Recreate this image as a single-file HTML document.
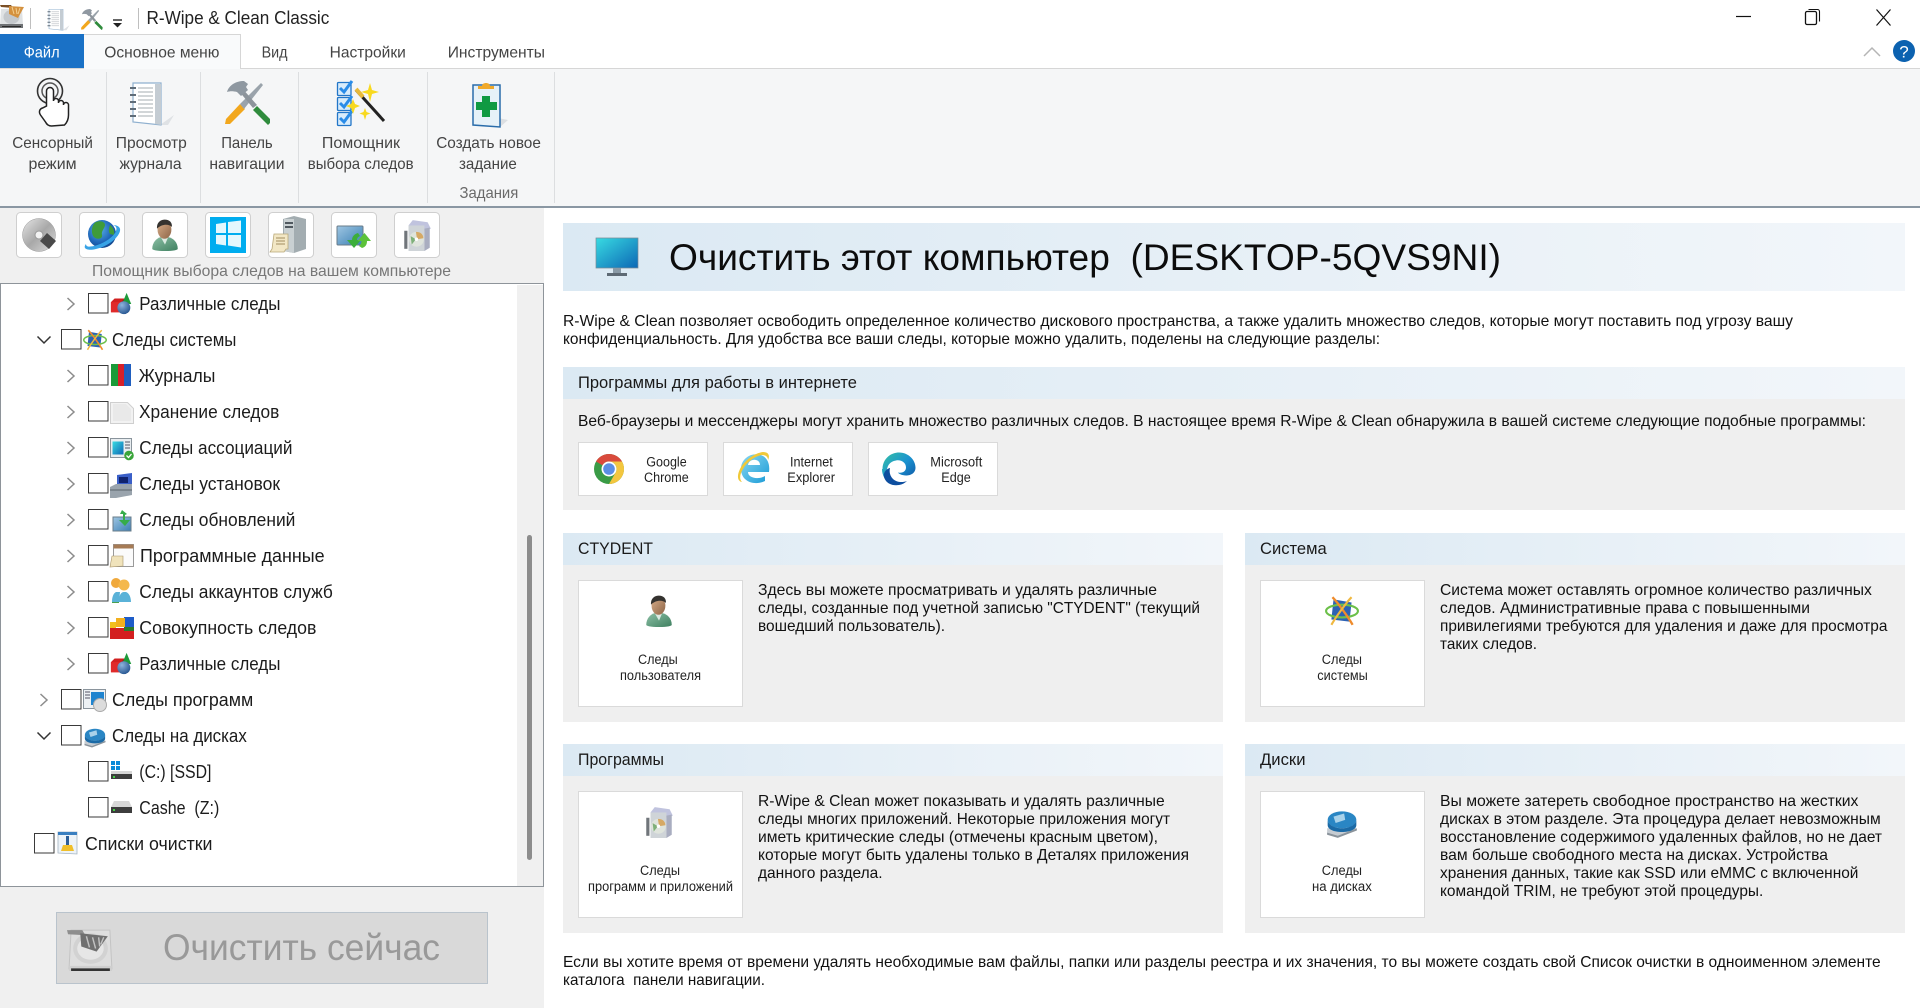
<!DOCTYPE html>
<html lang="ru"><head><meta charset="utf-8"><title>R-Wipe &amp; Clean Classic</title>
<style>
html,body{margin:0;padding:0;background:#fff;overflow:hidden}
svg{display:block}
text{font-family:"Liberation Sans",Arial,sans-serif;white-space:pre}
.r{font-size:16px;fill:#444}
.t{font-size:18.5px;fill:#1c1c1c}
.p{font-size:16px;fill:#111}
.h{font-size:16.5px;fill:#1a1a1a}
.l{font-size:13.5px;fill:#222}
</style></head><body>
<svg xmlns="http://www.w3.org/2000/svg" width="1920" height="1008" viewBox="0 0 1920 1008">
<defs>
<linearGradient id="hg" x1="0" x2="1" y1="0" y2="0"><stop offset="0" stop-color="#dbe9f3"/><stop offset="1" stop-color="#f2f6fa"/></linearGradient>
<linearGradient id="mon" x1="0" x2="1" y1="0" y2="1"><stop offset="0" stop-color="#38dbe2"/><stop offset="1" stop-color="#0c67b5"/></linearGradient>
<linearGradient id="skin" x1="0" x2="1" y1="0" y2="1"><stop offset="0" stop-color="#d8ae8a"/><stop offset="1" stop-color="#8e6547"/></linearGradient>
<linearGradient id="grn" x1="0" x2="1" y1="0" y2="1"><stop offset="0" stop-color="#8dc0a6"/><stop offset="1" stop-color="#3f8060"/></linearGradient>
<linearGradient id="disc" x1="0" x2="1" y1="0" y2="1"><stop offset="0" stop-color="#e6e6e6"/><stop offset=".5" stop-color="#a8a8a8"/><stop offset="1" stop-color="#dcdcdc"/></linearGradient>
<linearGradient id="scr" x1="0" x2="1" y1="0" y2="1"><stop offset="0" stop-color="#9fc6e2"/><stop offset="1" stop-color="#3a7fb4"/></linearGradient>
<radialGradient id="globe" cx=".4" cy=".35" r=".75"><stop offset="0" stop-color="#5ab0e8"/><stop offset=".6" stop-color="#1f66b8"/><stop offset="1" stop-color="#123f80"/></radialGradient>
<radialGradient id="blueb" cx=".35" cy=".3" r=".8"><stop offset="0" stop-color="#8db4dc"/><stop offset="1" stop-color="#1f4f8c"/></radialGradient>
<linearGradient id="edge" x1="0" x2="1" y1="0" y2="1"><stop offset="0" stop-color="#35c1a4"/><stop offset=".5" stop-color="#1b93d0"/><stop offset="1" stop-color="#0c4a9c"/></linearGradient>
<linearGradient id="ie" x1="0" x2="1" y1="0" y2="1"><stop offset="0" stop-color="#8ad8f2"/><stop offset="1" stop-color="#1a9ad6"/></linearGradient>

<symbol id="user" viewBox="0 0 32 32">
<path d="M4 29c0-6 4-10 8-11h7c5 1 9 5 9 11 0 1-4 2-12 2S4 30 4 29z" fill="url(#grn)"/>
<path d="M12 18l4 7 3-7z" fill="#dcebe3"/>
<ellipse cx="15.5" cy="11" rx="6.5" ry="8.5" fill="url(#skin)"/>
<path d="M8.5 10C8 4 12 1.500 16 1.500s7 2.500 6.500 7C20 5.500 13 5.500 8.500 10z" fill="#34322f"/>
</symbol>
<symbol id="atom" viewBox="0 0 32 32">
<path d="M8 5l17 3-2 18-17-2z" fill="#2d62b4"/>
<ellipse cx="16" cy="16" rx="15" ry="6" fill="none" stroke="#6cc04a" stroke-width="2"/>
<path d="M7 3C12 8 22 22 26 29" fill="none" stroke="#ef8b2b" stroke-width="2.200"/>
<path d="M25 3C20 8 10 22 6 29" fill="none" stroke="#f0b840" stroke-width="2"/>
</symbol>
<symbol id="box" viewBox="0 0 32 32">
<path d="M8 7l4-5 14 2 3 6-6 2z" fill="#c0c3de"/>
<path d="M8 7h15v24H8z" fill="#cfd4d8"/>
<path d="M23 10l5-1v19l-5 3z" fill="#a9adc0"/>
<path d="M4 12h3v17H4z" fill="#70757a"/>
<circle cx="15.5" cy="20" r="7" fill="#dfe4dc"/>
<path d="M15 13c5 0 7 3 7 6l-6 1z" fill="#d6a964"/>
<path d="M10 17l5 3-4 5z" fill="#7fb07a"/>
<circle cx="15.5" cy="20" r="1.600" fill="#fff"/>
</symbol>
<symbol id="disks" viewBox="0 0 32 32">
<path d="M2 21l20-3 8 3-18 8-10-3z" fill="#c6ccd2"/>
<path d="M2 25l10 3 18-7v2l-18 7-10-3z" fill="#8a939b"/>
<ellipse cx="16" cy="13" rx="13.500" ry="8" fill="#2a86c4"/>
<path d="M2.500 13v5c0 4 6 6.500 13.500 6.500S29.500 22 29.500 18v-5c0 4-6 8-13.500 8S2.500 17 2.500 13z" fill="#1b6aa6"/>
<path d="M8 10l10-3 1 6-9 3z" fill="#a9d2ea"/>
</symbol>
<symbol id="cube" viewBox="0 0 26 26">
<path d="M1 11l4-4h11v11l-4 4H1z" fill="#d11f1f"/><path d="M1 11h11v11H1z" fill="#e02a2a"/><path d="M12 11l4-4v11l-4 4z" fill="#8e1010"/>
<path d="M18 1l5 12h-10z" fill="#1e9a3a"/>
<circle cx="15" cy="17" r="7" fill="url(#blueb)"/>
</symbol>
<symbol id="diskico" viewBox="0 0 48 48">
<path d="M4 6h38l2 38H2z" fill="#dedede" stroke="#c4c4c4"/>
<ellipse cx="23" cy="24" rx="17" ry="15" fill="#d2d2d2"/>
<ellipse cx="23" cy="24" rx="13" ry="11" fill="#e6e6e6"/>
<path d="M2 41h42v5H2z" fill="#cfcfcf"/><path d="M4 43.500h38v2.500H4z" fill="#333"/>
<path d="M0 6l15 0 3 5L1 10z" fill="#8e8e8e"/>
<path d="M13 9l27 3-11 15-15-5z" fill="#707070"/>
<path d="M19 12l3 11M25 13l3 11M31 13l1 9M36 13l-3 7" stroke="#c2c2c2" stroke-width="1.400"/>
</symbol>
<symbol id="tools" viewBox="223 80 48 46">
<path d="M225 124l1-5 14-15 5 5-15 15z" fill="#f2a71d"/>
<path d="M240 104l21-21 2 2-19 24z" fill="#9aa3ab"/>
<path d="M268 125l-15-15 4-4 13 13 0 4z" fill="#2f8b3c"/>
<path d="M253 108L238 90l3-3 16 18z" fill="#8d949b"/>
<path d="M227 92c2-7 9-11 17-11l4 3-2 3 2 3-7 6-4-4c-4-1-7-1-10 0z" fill="#8f98a1"/>
</symbol>
<symbol id="journal" viewBox="129 81 46 45">
<path d="M160 125l14-10-6 10z" fill="#dfe2e5"/>
<path d="M133 83h28v42l-28-3z" fill="#fff" stroke="#8fb0cf" stroke-width="1.200"/>
<path d="M155 84h6v41l-6-1z" fill="#c4ccd3"/>
<path d="M138 88h15M138 92h15M138 96h15M138 100h15M138 104h15M138 108h15M138 112h15M138 116h15" stroke="#c3c8cc" stroke-width="1.500"/>
<path d="M130 88h6M130 95h6M130 102h6M130 109h6M130 116h6" stroke="#5f6c78" stroke-width="2"/>
</symbol>
</defs>

<!-- title bar -->
<rect width="1920" height="1008" fill="#fff"/>
<path d="M1 9h21l1 16H0z" fill="#dfe2e4"/>
<ellipse cx="11.500" cy="17" rx="8" ry="7" fill="#c4c8cc"/>
<path d="M0 24h23v4H0z" fill="#6f7275"/><path d="M2 26h19v1H2z" fill="#2b2b2b"/>
<path d="M0 5l11 0 2 3-12-1z" fill="#7a4f25"/>
<path d="M9 6l15 1-6 11-9-4z" fill="#d4913f"/>
<path d="M12 7l2 7M16 8l1 6M20 8l-2 6" stroke="#f3cf8f"/>
<rect x="30" y="8" width="1" height="21" fill="#bfbfbf"/>
<use href="#journal" x="47" y="8" width="23" height="23"/>
<use href="#tools" x="80" y="8" width="23" height="23"/>
<path d="M113 20h9" stroke="#333" stroke-width="1.500"/><path d="M113 23h9l-4.500 4.500z" fill="#222"/>
<rect x="138" y="8" width="1" height="21" fill="#bfbfbf"/>
<text x="146.500" y="24" font-size="18.500" fill="#222" textLength="182.800" lengthAdjust="spacingAndGlyphs">R-Wipe &amp; Clean Classic</text>
<path d="M1736 16.500h15" stroke="#111" stroke-width="1.200"/>
<rect x="1805.500" y="11.500" width="11" height="13" rx="1.500" fill="none" stroke="#111" stroke-width="1.300"/>
<path d="M1808.500 9.500h9a2 2 0 0 1 2 2v10" fill="none" stroke="#111" stroke-width="1.100"/>
<path d="M1876.500 9.500l14 16M1890.500 9.500l-14 16" stroke="#111" stroke-width="1.200"/>

<!-- ribbon -->
<rect x="0" y="68" width="1920" height="139" fill="#f5f6f7"/>
<rect x="0" y="68" width="1920" height="1" fill="#d6d6d6"/>
<rect x="0" y="206" width="1920" height="2" fill="#8a97a3"/>
<rect x="0" y="34" width="84" height="34" fill="#1a71c6"/>
<rect x="84" y="34" width="156" height="35" fill="#f9fafb"/>
<rect x="84" y="34" width="156" height="1" fill="#d6d6d6"/>
<rect x="240" y="34" width="1" height="35" fill="#d6d6d6"/>
<text x="23.700" y="57.500" font-size="16" fill="#fff" textLength="35.900" lengthAdjust="spacingAndGlyphs">Файл</text>
<text class="r" x="104.300" y="57.500" textLength="115.100" lengthAdjust="spacingAndGlyphs">Основное меню</text>
<text class="r" x="261.600" y="57.500" textLength="25.900" lengthAdjust="spacingAndGlyphs">Вид</text>
<text class="r" x="329.600" y="57.500" textLength="76.200" lengthAdjust="spacingAndGlyphs">Настройки</text>
<text class="r" x="447.700" y="57.500" textLength="97.300" lengthAdjust="spacingAndGlyphs">Инструменты</text>
<path d="M1864 56l8-8 8 8" fill="none" stroke="#b5b5b5" stroke-width="1.500"/>
<ellipse cx="1904" cy="51" rx="11" ry="11" fill="#0c62b0"/>
<text x="1904" y="57.500" font-size="17" fill="#fff" text-anchor="middle">?</text>

<g fill="#dcdee0"><rect x="106" y="72" width="1" height="131"/><rect x="200" y="72" width="1" height="131"/><rect x="298" y="72" width="1" height="131"/><rect x="427" y="72" width="1" height="131"/><rect x="554" y="72" width="1" height="131"/></g>

<!-- touch icon -->
<circle cx="50" cy="91" r="12.500" fill="none" stroke="#333" stroke-width="1.600"/>
<circle cx="50" cy="91" r="8" fill="none" stroke="#555" stroke-width="1.500"/>
<path d="M46.500 106V91a3.500 3.500 0 0 1 7 0v10a2.500 2.500 0 0 1 5 0v2a2.500 2.500 0 0 1 5 0v2a2.500 2.500 0 0 1 5 0v10c0 4-1 7-4 10l-13 1c-3 0-5-2-6-4l-5-7c-2-3-1-6 2-7z" fill="#fff" stroke="#222" stroke-width="1.500"/>
<use href="#journal" x="129" y="81" width="46" height="45"/>
<use href="#tools" x="223" y="80" width="48" height="46"/>
<!-- wizard -->
<g fill="#d8ecfb" stroke="#2276c8" stroke-width="1.300">
<rect x="337.500" y="82.500" width="13.500" height="13" rx="1"/><rect x="337.500" y="97.500" width="13.500" height="13" rx="1"/><rect x="337.500" y="112.500" width="13.500" height="13" rx="1"/></g>
<g fill="none" stroke="#2a8ce8" stroke-width="3"><path d="M340 88l4 4 8-11"/><path d="M340 103l4 4 8-11"/><path d="M340 118l4 4 8-11"/></g>
<path d="M356 90l28 31" stroke="#222" stroke-width="3"/><path d="M356 89l7 8" stroke="#e8b93a" stroke-width="4"/>
<g fill="#f8d91f"><path d="M370 83l2 7 7 2-7 2-2 8-2-8-7-2 7-2z"/><path d="M353 99l2 5 5 2-5 2-2 6-2-6-5-2 5-2z"/><path d="M365 108l1.500 4 4 1.500-4 1.500-1.500 5-1.500-5-4-1.500 4-1.500z"/></g>
<!-- clipboard -->
<path d="M500 127l8-7-10-2z" fill="#dcdfe2"/>
<path d="M473 85l27 0v42l-27-2z" fill="#e6f1f8" stroke="#2a6caa" stroke-width="1.500"/>
<path d="M478 89h16v-3h-4c0-4-8-4-8 0h-4z" fill="#f0a92a"/>
<path d="M482 96h8v6h7v8h-7v7h-8v-7h-6v-8h6z" fill="#109a42"/>

<text class="r" x="12.200" y="148" textLength="80.700" lengthAdjust="spacingAndGlyphs">Сенсорный</text>
<text class="r" x="28.500" y="169" textLength="48.100" lengthAdjust="spacingAndGlyphs">режим</text>
<text class="r" x="115.800" y="148" textLength="71" lengthAdjust="spacingAndGlyphs">Просмотр</text>
<text class="r" x="119.500" y="169" textLength="62.100" lengthAdjust="spacingAndGlyphs">журнала</text>
<text class="r" x="221.200" y="148" textLength="51.500" lengthAdjust="spacingAndGlyphs">Панель</text>
<text class="r" x="209.400" y="169" textLength="75.100" lengthAdjust="spacingAndGlyphs">навигации</text>
<text class="r" x="321.900" y="148" textLength="78.100" lengthAdjust="spacingAndGlyphs">Помощник</text>
<text class="r" x="307.800" y="169" textLength="105.800" lengthAdjust="spacingAndGlyphs">выбора следов</text>
<text class="r" x="436.200" y="148" textLength="104.700" lengthAdjust="spacingAndGlyphs">Создать новое</text>
<text class="r" x="459" y="169" textLength="57.800" lengthAdjust="spacingAndGlyphs">задание</text>
<text x="459.500" y="198" font-size="16" fill="#6a6a6a" textLength="58.800" lengthAdjust="spacingAndGlyphs">Задания</text>

<!-- left panel -->
<rect x="0" y="208" width="544" height="800" fill="#f0f0f0"/>
<g fill="#fff" stroke="#cfcfcf"><rect x="16.500" y="212.500" width="45" height="45" rx="4"/><rect x="79.500" y="212.500" width="45" height="45" rx="4"/><rect x="142.500" y="212.500" width="45" height="45" rx="4"/><rect x="205.500" y="212.500" width="45" height="45" rx="4"/><rect x="268.500" y="212.500" width="45" height="45" rx="4"/><rect x="331.500" y="212.500" width="45" height="45" rx="4"/><rect x="394.500" y="212.500" width="45" height="45" rx="4"/></g>
<!-- disc -->
<circle cx="39" cy="235" r="16.500" fill="url(#disc)" stroke="#999" stroke-width=".5"/>
<circle cx="39" cy="235" r="4" fill="#f2f2f2" stroke="#999"/>
<path d="M40 241l7-8 9 8-7 8z" fill="#4a4a4a"/>
<!-- globe -->
<circle cx="102" cy="234" r="14" fill="url(#globe)"/>
<path d="M96 222c5-2 9 0 9 3s-4 6-3 10-5 5-8 2-3-12 2-15zM110 225c3 2 5 6 4 10l-4-1c-2-3-1-6 0-9z" fill="#3f9b3a"/>
<path d="M86 244c-4 5 2 7 10 5 10-2 22-10 24-18 1-4-3-6-7-6 3 1 5 3 2 8-4 6-13 11-21 13-5 1-8 1-8-2z" fill="#38a3e6"/>
<use href="#user" x="148" y="218" width="34" height="34"/>
<!-- windows -->
<rect x="210" y="217" width="36" height="36" fill="#00adef"/>
<path d="M216 224l10-1.500V233h-10zM228 222l13-1.500V233h-13zM216 235h10v10.500l-10-1.500zM228 235h13v12.500l-13-2z" fill="#e4f7fd"/>
<!-- server -->
<path d="M283 219l11-3 12 3v30l-12 4-11-2z" fill="#a3adb1"/>
<path d="M284 219h10v34l-10-2z" fill="#c9d0d2"/><path d="M285 222h8v2h-8zM285 226h8v2h-8z" fill="#50595f"/>
<path d="M274 234h14v15h-2l-2 3h-14l2-3z" fill="#f2e7c5" stroke="#b9a878" stroke-width=".8"/>
<path d="M276 238h9M276 241h9M276 244h9" stroke="#a18d5e"/>
<!-- screen arrows -->
<rect x="337" y="226" width="26" height="19" rx="1" fill="url(#scr)" stroke="#6a7c8a"/>
<path d="M358 233c-4 1-6 4-6 7h-5l7 8 7-8h-4c0-2 1-3 3-4z" fill="#3cae3a"/>
<path d="M362 248c4-1 5-4 5-7h4l-6.500-8-7 8h4c0 2-1 4-2.500 5z" fill="#5cc23a"/>
<use href="#box" x="400" y="218" width="34" height="34"/>
<text x="92" y="276" font-size="16" fill="#777" textLength="359" lengthAdjust="spacingAndGlyphs">Помощник выбора следов на вашем компьютере</text>

<!-- tree -->
<rect x=".5" y="283.500" width="543" height="603" fill="#fff" stroke="#8e949a"/>
<rect x="517" y="285" width="26" height="601" fill="#f0f0f0"/>
<rect x="527" y="535" width="5" height="325" rx="2.500" fill="#8c8c8c"/>

<g fill="none">
<g stroke="#8c8c8c" stroke-width="1.500"><path d="M67.500 298l6.500 6-6.500 6M67.500 370l6.500 6-6.500 6M67.500 406l6.500 6-6.500 6M67.500 442l6.500 6-6.500 6M67.500 478l6.500 6-6.500 6M67.500 514l6.500 6-6.500 6M67.500 550l6.500 6-6.500 6M67.500 586l6.500 6-6.500 6M67.500 622l6.500 6-6.500 6M67.500 658l6.500 6-6.500 6M40.500 694l6.500 6-6.500 6"/></g>
<g stroke="#333" stroke-width="1.500"><path d="M37.500 336.500l6.500 6.500 6.500-6.500M37.500 732.500l6.500 6.500 6.500-6.500"/></g>
</g>
<g fill="#fff" stroke="#3a3a3a"><rect x="88.500" y="293.500" width="19.500" height="19.500"/><rect x="61.500" y="329.500" width="19.500" height="19.500"/><rect x="88.500" y="365.500" width="19.500" height="19.500"/><rect x="88.500" y="401.500" width="19.500" height="19.500"/><rect x="88.500" y="437.500" width="19.500" height="19.500"/><rect x="88.500" y="473.500" width="19.500" height="19.500"/><rect x="88.500" y="509.500" width="19.500" height="19.500"/><rect x="88.500" y="545.500" width="19.500" height="19.500"/><rect x="88.500" y="581.500" width="19.500" height="19.500"/><rect x="88.500" y="617.500" width="19.500" height="19.500"/><rect x="88.500" y="653.500" width="19.500" height="19.500"/><rect x="61.500" y="689.500" width="19.500" height="19.500"/><rect x="61.500" y="725.500" width="19.500" height="19.500"/><rect x="88.500" y="761.500" width="19.500" height="19.500"/><rect x="88.500" y="797.500" width="19.500" height="19.500"/><rect x="34.500" y="833.500" width="19.500" height="19.500"/></g>

<use href="#cube" x="110" y="292" width="24" height="24"/>
<use href="#atom" x="83" y="328" width="24" height="24"/>
<!-- books -->
<rect x="111" y="364" width="7" height="22" fill="#1a9a38"/><rect x="118" y="364" width="6" height="22" fill="#d6202a"/><rect x="124" y="364" width="7" height="22" fill="#1f5ebf"/>
<!-- storage -->
<path d="M110.500 402.500h17l6 6v15h-23z" fill="#f2f2f2" stroke="#cfcfcf"/><path d="M113 404h13l5 5v12h-18z" fill="#e9e9e9"/>
<!-- assoc -->
<rect x="110.500" y="438.500" width="21" height="19" fill="#e8edf0" stroke="#8a949c"/><rect x="112.500" y="441.500" width="11" height="13" fill="url(#mon)"/><path d="M125 442h5M125 445h5M125 448h5" stroke="#556"/>
<circle cx="129" cy="455.500" r="4.800" fill="#3aa53a"/><path d="M126.500 455.500l2 2 3-3.500" stroke="#fff" stroke-width="1.300" fill="none"/>
<!-- install -->
<path d="M117 475l15-2v13h-15z" fill="#3a5fc8"/><rect x="119" y="477" width="9" height="6" fill="#10236e"/><path d="M110 487l6-3h16v11l-16 3h-6z" fill="#9aa4ad"/><path d="M110 490h22" stroke="#59636c"/>
<!-- updates -->
<rect x="113" y="517" width="18" height="14" fill="url(#scr)" stroke="#6a7c8a"/><path d="M122 510l5 4-2 1v5l5 0-5 6-6-6h4v-6l-3 0z" fill="#35ac4a"/>
<!-- progdata -->
<rect x="113.500" y="544.500" width="20" height="22" fill="#fbfbfb" stroke="#9a9a9a"/><rect x="113.500" y="544.500" width="20" height="4" fill="#a67b55"/>
<path d="M112 556h11v10l-13 1z" fill="#f0e3bb" stroke="#a8946a" stroke-width=".6"/>
<!-- accounts -->
<circle cx="116" cy="583" r="5" fill="#f0a93c"/><circle cx="124" cy="585" r="5.500" fill="#f4b84c"/>
<path d="M112 602c0-6 2-9 4-10h4l-1 10zM119 602c0-7 2-10 5-10h2c3 1 5 5 5 10z" fill="#5ab2d8"/><path d="M112 602h7v1h-7z" fill="#49a04f"/>
<!-- aggregate -->
<rect x="124" y="617" width="10" height="10" fill="#1e5cc8"/><rect x="116" y="618" width="9" height="9" fill="#f2b01e"/><rect x="110" y="622" width="6" height="6" fill="#f2c01e"/><rect x="110" y="628" width="24" height="11" fill="#d31f1f"/><rect x="124" y="627" width="10" height="4" fill="#2b7a2b"/>
<use href="#cube" x="110" y="652" width="24" height="24"/>
<!-- programs -->
<rect x="83.500" y="689.500" width="22" height="19" fill="#edf1f4" stroke="#8a949c"/><path d="M85 692h5M85 695h5M85 698h5" stroke="#556"/><rect x="91" y="692" width="13" height="13" fill="#1f84cf"/><circle cx="100" cy="705" r="6.500" fill="#dcdcdc" stroke="#aaa"/>
<use href="#disks" x="83" y="725" width="24" height="24"/>
<!-- drives -->
<rect x="111" y="761" width="4" height="4" fill="#0a8ad8"/><rect x="116" y="761" width="4" height="4" fill="#0a8ad8"/><rect x="111" y="766" width="4" height="4" fill="#0a8ad8"/><rect x="116" y="766" width="4" height="4" fill="#0a8ad8"/>
<path d="M111 771h21v3h-21z" fill="#d7d7d7"/><rect x="111" y="774" width="21" height="5" fill="#3d3d3d"/><rect x="113" y="776" width="2" height="2" fill="#44d044"/>
<path d="M114 801h15l3 6h-21z" fill="#d7d7d7"/><rect x="111" y="807" width="21" height="6" fill="#3d3d3d"/><rect x="113" y="809" width="2" height="2" fill="#44d044"/>
<!-- list -->
<path d="M58 832h19v22l-19-1z" fill="#edf3f8" stroke="#a5b4c2" stroke-width=".8"/><rect x="58" y="832" width="19" height="3" fill="#3a7fc0"/><path d="M66 836h3v9h-3z" fill="#2c5e98"/><path d="M63 845h9l2 6H61z" fill="#f0bf2a"/>

<text class="t" x="139.300" y="310" textLength="141.100" lengthAdjust="spacingAndGlyphs">Различные следы</text>
<text class="t" x="112" y="346" textLength="124.400" lengthAdjust="spacingAndGlyphs">Следы системы</text>
<text class="t" x="138.600" y="382" textLength="76.800" lengthAdjust="spacingAndGlyphs">Журналы</text>
<text class="t" x="139" y="418" textLength="140.300" lengthAdjust="spacingAndGlyphs">Хранение следов</text>
<text class="t" x="139.300" y="454" textLength="153.200" lengthAdjust="spacingAndGlyphs">Следы ассоциаций</text>
<text class="t" x="139.300" y="490" textLength="140.700" lengthAdjust="spacingAndGlyphs">Следы установок</text>
<text class="t" x="139.300" y="526" textLength="156.100" lengthAdjust="spacingAndGlyphs">Следы обновлений</text>
<text class="t" x="140" y="562" textLength="184.600" lengthAdjust="spacingAndGlyphs">Программные данные</text>
<text class="t" x="139.300" y="598" textLength="193.600" lengthAdjust="spacingAndGlyphs">Следы аккаунтов служб</text>
<text class="t" x="139.300" y="634" textLength="177.100" lengthAdjust="spacingAndGlyphs">Совокупность следов</text>
<text class="t" x="139.300" y="670" textLength="141.100" lengthAdjust="spacingAndGlyphs">Различные следы</text>
<text class="t" x="112" y="706" textLength="141.200" lengthAdjust="spacingAndGlyphs">Следы программ</text>
<text class="t" x="112" y="742" textLength="134.800" lengthAdjust="spacingAndGlyphs">Следы на дисках</text>
<text class="t" x="139.300" y="778" textLength="72.100" lengthAdjust="spacingAndGlyphs">(C:) [SSD]</text>
<text class="t" x="139.300" y="814" textLength="80" lengthAdjust="spacingAndGlyphs">Cashe&#160;&#160;(Z:)</text>
<text class="t" x="85" y="850" textLength="127.500" lengthAdjust="spacingAndGlyphs">Списки очистки</text>

<!-- clean button -->
<rect x="56.500" y="912.500" width="431" height="71" fill="#d9d9d9" stroke="#b9c3cc"/>
<use href="#diskico" x="67" y="924" width="49" height="49"/>
<text x="163" y="960" font-size="37" fill="#999" textLength="277" lengthAdjust="spacingAndGlyphs">Очистить сейчас</text>

<!-- right: title -->
<rect x="563" y="223" width="1342" height="68" fill="url(#hg)"/>
<path d="M596 238h42v30h-42z" fill="url(#mon)" stroke="#7a8a96" stroke-width=".7"/>
<rect x="613" y="268" width="8" height="6" fill="#8a9aa6"/><rect x="607" y="273" width="20" height="3" fill="#5e6a74"/>
<text x="669" y="270" font-size="37" fill="#0c0c0c" textLength="832" lengthAdjust="spacingAndGlyphs">Очистить этот компьютер&#160;&#160;(DESKTOP-5QVS9NI)</text>

<text class="p" x="563" y="326" textLength="1230" lengthAdjust="spacingAndGlyphs">R-Wipe &amp; Clean позволяет освободить определенное количество дискового пространства, а также удалить множество следов, которые могут поставить под угрозу вашу</text>
<text class="p" x="563" y="344" textLength="817" lengthAdjust="spacingAndGlyphs">конфиденциальность. Для удобства все ваши следы, которые можно удалить, поделены на следующие разделы:</text>

<!-- internet section -->
<rect x="563" y="399" width="1342" height="111" fill="#efefef"/>
<rect x="563" y="367" width="1342" height="32" fill="url(#hg)"/>
<text class="h" x="578" y="388" textLength="279" lengthAdjust="spacingAndGlyphs">Программы для работы в интернете</text>
<text class="p" x="578" y="426" textLength="1288" lengthAdjust="spacingAndGlyphs">Веб-браузеры и мессенджеры могут хранить множество различных следов. В настоящее время R-Wipe &amp; Clean обнаружила в вашей системе следующие подобные программы:</text>
<g fill="#fff" stroke="#dadada"><rect x="578.500" y="442.500" width="129" height="53"/><rect x="723.500" y="442.500" width="129" height="53"/><rect x="868.500" y="442.500" width="129" height="53"/></g>
<!-- chrome -->
<circle cx="609" cy="469" r="15" fill="#3a9b46"/>
<path d="M596 461.500A15 15 0 0 1 622 461.500H609a7.500 7.500 0 0 0-6.500 3.800z" fill="#d94a3c"/>
<path d="M622 461.500A15 15 0 0 1 609 484l6.500-11.200a7.500 7.500 0 0 0-6.500-11.300z" fill="#f3c63f"/>
<circle cx="609" cy="469" r="7.500" fill="#fff"/><circle cx="609" cy="469" r="5.800" fill="#5a8ee4"/>
<!-- IE -->
<path d="M769 472h-21c0 6 10 8 17 4v5c-10 5-24 1-24-12 0-12 13-18 22-13 5 3 7 9 6 16zM748 465h12c0-7-11-7-12 0z" fill="url(#ie)" fill-rule="evenodd"/>
<path d="M742 482c-5-1-5-7-2-13 4-8 14-16 23-17 6 0 7 4 5 8 0-3-2-5-6-5-7 1-15 7-19 14-3 5-4 10-1 13z" fill="#f0c93a"/>
<!-- edge -->
<path d="M882.500 469c0-10 8-16.500 16.500-16.500 10 0 16.500 8 16.500 15 0 6-5 8-9.500 8-4 0-8-2-8-3 4 1 8-1 8-5 0-5-5-8-10-7-6 1-9 5-9 10 0 5 4 12 11 14-9 1-16-6-16-15.500z" fill="url(#edge)"/>
<path d="M884 477c2 7 9 9 15 8 3-.5 6-2 8-4-5 2-11 1-14-2-3-3-4-7-3-11-4 1-7 5-6 9z" fill="#0d4e9f"/>
<text class="l" x="646.300" y="466.500" textLength="40.400" lengthAdjust="spacingAndGlyphs">Google</text>
<text class="l" x="644" y="482" textLength="44.700" lengthAdjust="spacingAndGlyphs">Chrome</text>
<text class="l" x="790" y="466.500" textLength="42.700" lengthAdjust="spacingAndGlyphs">Internet</text>
<text class="l" x="787.300" y="482" textLength="47.700" lengthAdjust="spacingAndGlyphs">Explorer</text>
<text class="l" x="930.300" y="466.500" textLength="52" lengthAdjust="spacingAndGlyphs">Microsoft</text>
<text class="l" x="941.300" y="482" textLength="29.400" lengthAdjust="spacingAndGlyphs">Edge</text>

<!-- grid sections -->
<rect x="563" y="565" width="660" height="157" fill="#efefef"/><rect x="563" y="533" width="660" height="32" fill="url(#hg)"/>
<rect x="1245" y="565" width="660" height="157" fill="#efefef"/><rect x="1245" y="533" width="660" height="32" fill="url(#hg)"/>
<rect x="563" y="776" width="660" height="157" fill="#efefef"/><rect x="563" y="744" width="660" height="32" fill="url(#hg)"/>
<rect x="1245" y="776" width="660" height="157" fill="#efefef"/><rect x="1245" y="744" width="660" height="32" fill="url(#hg)"/>
<g fill="#fff" stroke="#dadada"><rect x="578.500" y="580.500" width="164" height="126"/><rect x="1260.500" y="580.500" width="164" height="126"/><rect x="578.500" y="791.500" width="164" height="126"/><rect x="1260.500" y="791.500" width="164" height="126"/></g>
<use href="#user" x="642" y="594" width="34" height="34"/>
<use href="#atom" x="1325" y="594" width="34" height="34"/>
<use href="#box" x="642" y="805" width="34" height="34"/>
<use href="#disks" x="1325" y="806" width="34" height="34"/>

<text class="h" x="578" y="554" textLength="75" lengthAdjust="spacingAndGlyphs">CTYDENT</text>
<text class="h" x="1260" y="554" textLength="66.700" lengthAdjust="spacingAndGlyphs">Система</text>
<text class="h" x="578" y="765" textLength="86" lengthAdjust="spacingAndGlyphs">Программы</text>
<text class="h" x="1260" y="765" textLength="45.500" lengthAdjust="spacingAndGlyphs">Диски</text>

<text class="l" x="638" y="664" textLength="39.700" lengthAdjust="spacingAndGlyphs">Следы</text>
<text class="l" x="620" y="680" textLength="81" lengthAdjust="spacingAndGlyphs">пользователя</text>
<text class="l" x="1321.800" y="664" textLength="40.200" lengthAdjust="spacingAndGlyphs">Следы</text>
<text class="l" x="1317.300" y="680" textLength="50.500" lengthAdjust="spacingAndGlyphs">системы</text>
<text class="l" x="640" y="875" textLength="40" lengthAdjust="spacingAndGlyphs">Следы</text>
<text class="l" x="588" y="891" textLength="145" lengthAdjust="spacingAndGlyphs">программ и приложений</text>
<text class="l" x="1321.800" y="875" textLength="40.200" lengthAdjust="spacingAndGlyphs">Следы</text>
<text class="l" x="1312" y="891" textLength="59.800" lengthAdjust="spacingAndGlyphs">на дисках</text>

<text class="p" x="758" y="595" textLength="399" lengthAdjust="spacingAndGlyphs">Здесь вы можете просматривать и удалять различные</text>
<text class="p" x="758" y="613" textLength="442" lengthAdjust="spacingAndGlyphs">следы, созданные под учетной записью "CTYDENT" (текущий</text>
<text class="p" x="758" y="631" textLength="187" lengthAdjust="spacingAndGlyphs">вошедший пользователь).</text>

<text class="p" x="1440" y="595" textLength="431.800" lengthAdjust="spacingAndGlyphs">Система может оставлять огромное количество различных</text>
<text class="p" x="1440" y="613" textLength="370" lengthAdjust="spacingAndGlyphs">следов. Административные права с повышенными</text>
<text class="p" x="1440" y="631" textLength="447.400" lengthAdjust="spacingAndGlyphs">привилегиями требуются для удаления и даже для просмотра</text>
<text class="p" x="1440" y="649" textLength="97" lengthAdjust="spacingAndGlyphs">таких следов.</text>

<text class="p" x="758" y="806" textLength="406.700" lengthAdjust="spacingAndGlyphs">R-Wipe &amp; Clean может показывать и удалять различные</text>
<text class="p" x="758" y="824" textLength="412" lengthAdjust="spacingAndGlyphs">следы многих приложений. Некоторые приложения могут</text>
<text class="p" x="758" y="842" textLength="400" lengthAdjust="spacingAndGlyphs">иметь критические следы (отмечены красным цветом),</text>
<text class="p" x="758" y="860" textLength="431" lengthAdjust="spacingAndGlyphs">которые могут быть удалены только в Деталях приложения</text>
<text class="p" x="758" y="878" textLength="124.600" lengthAdjust="spacingAndGlyphs">данного раздела.</text>

<text class="p" x="1440" y="806" textLength="418.400" lengthAdjust="spacingAndGlyphs">Вы можете затереть свободное пространство на жестких</text>
<text class="p" x="1440" y="824" textLength="440.700" lengthAdjust="spacingAndGlyphs">дисках в этом разделе. Эта процедура делает невозможным</text>
<text class="p" x="1440" y="842" textLength="442" lengthAdjust="spacingAndGlyphs">восстановление содержимого удаленных файлов, но не дает</text>
<text class="p" x="1440" y="860" textLength="388" lengthAdjust="spacingAndGlyphs">вам больше свободного места на дисках. Устройства</text>
<text class="p" x="1440" y="878" textLength="418.400" lengthAdjust="spacingAndGlyphs">хранения данных, такие как SSD или eMMC с включенной</text>
<text class="p" x="1440" y="896" textLength="323.300" lengthAdjust="spacingAndGlyphs">командой TRIM, не требуют этой процедуры.</text>

<text class="p" x="563" y="967" textLength="1317.700" lengthAdjust="spacingAndGlyphs">Если вы хотите время от времени удалять необходимые вам файлы, папки или разделы реестра и их значения, то вы можете создать свой Список очистки в одноименном элементе</text>
<text class="p" x="563" y="985" textLength="202" lengthAdjust="spacingAndGlyphs">каталога&#160;&#160;панели навигации.</text>
</svg>
</body></html>
